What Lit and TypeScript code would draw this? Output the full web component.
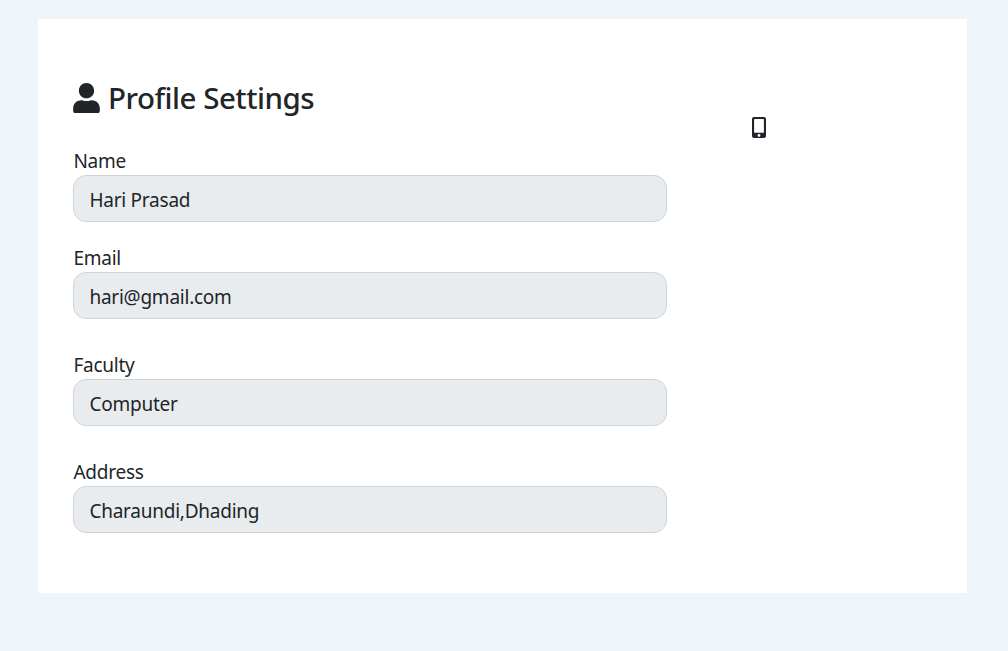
import { LitElement, html, css } from "lit";
import { customElement, property } from "lit/decorators.js";

@customElement("profile-field")
class ProfileField extends LitElement {
  @property() label = "";
  @property() value = "";

  static styles = css`
    :host {
      display: block;
    }
    .label {
      display: block;
      height: 30px;
      box-sizing: border-box;
      padding: 1px 0 0 0.4px;
      line-height: 30px;
    }
    .value {
      box-sizing: border-box;
      height: 47px;
      padding: 2px 15px 0 15.4px;
      border: 1px solid #ced4da;
      border-radius: 13px;
      background: #e8ecef;
      line-height: 45px;
    }
  `;

  render() {
    return html`
      <span class="label">${this.label}</span>
      <div class="value">${this.value}</div>
    `;
  }
}

@customElement("app-root")
class AppRoot extends LitElement {
  static styles = css`
    :host {
      display: block;
      box-sizing: border-box;
      height: 651px;
      padding: 19px 41px 58px 38px;
      background: #eff4f9;
      color: #212529;
      font: 19px "Noto Sans", "Open Sans", sans-serif;
      letter-spacing: -0.24px;
    }
    .card {
      display: flex;
      box-sizing: border-box;
      height: 574px;
      padding: 60px 35px 0;
      background: #fff;
    }
    .main {
      width: 594px;
    }
    .title {
      display: flex;
      align-items: center;
      gap: 8px;
      height: 38px;
      margin: 0 0 28px;
      font-size: 29.5px;
      font-weight: 500;
      letter-spacing: -0.48px;
      white-space: nowrap;
    }
    .title span {
      padding-bottom: 2px;
    }
    .user {
      width: 27px;
      height: 30.5px;
    }
    .spaced {
      margin-top: 20px;
    }
    .wide {
      margin-top: 30px;
    }
    .phone {
      width: 14px;
      height: 21px;
      margin: 38px 0 0 85px;
    }
    svg {
      display: block;
      fill: #212529;
    }
  `;

  render() {
    return html`
      <div class="card">
        <div class="main">
          <h2 class="title">
            <svg class="user" viewBox="0 0 448 512">
              <path
                d="M224 256c70.7 0 128-57.3 128-128S294.7 0 224 0 96 57.3 96 128s57.3 128 128 128zm89.6 32h-16.7c-22.2 10.2-46.9 16-72.9 16s-50.6-5.8-72.9-16h-16.7C60.2 288 0 348.2 0 422.4V464c0 26.5 21.5 48 48 48h352c26.5 0 48-21.5 48-48v-41.6c0-74.2-60.2-134.4-134.4-134.4z"
              />
            </svg>
            <span>Profile Settings</span>
          </h2>
          <profile-field label="Name" value="Hari Prasad"></profile-field>
          <profile-field class="spaced" label="Email" value="hari@gmail.com"></profile-field>
          <profile-field class="wide" label="Faculty" value="Computer"></profile-field>
          <profile-field class="wide" label="Address" value="Charaundi,Dhading"></profile-field>
        </div>
        <svg class="phone" viewBox="0 0 320 512" preserveAspectRatio="none">
          <path
            d="M272 0H48C21.5 0 0 21.5 0 48v416c0 26.5 21.5 48 48 48h224c26.5 0 48-21.5 48-48V48c0-26.5-21.5-48-48-48zM160 480c-17.7 0-32-14.3-32-32s14.3-32 32-32 32 14.3 32 32-14.3 32-32 32zm112-108c0 6.6-5.4 12-12 12H60c-6.6 0-12-5.4-12-12V60c0-6.6 5.4-12 12-12h200c6.6 0 12 5.4 12 12v312z"
          />
        </svg>
      </div>
    `;
  }
}
